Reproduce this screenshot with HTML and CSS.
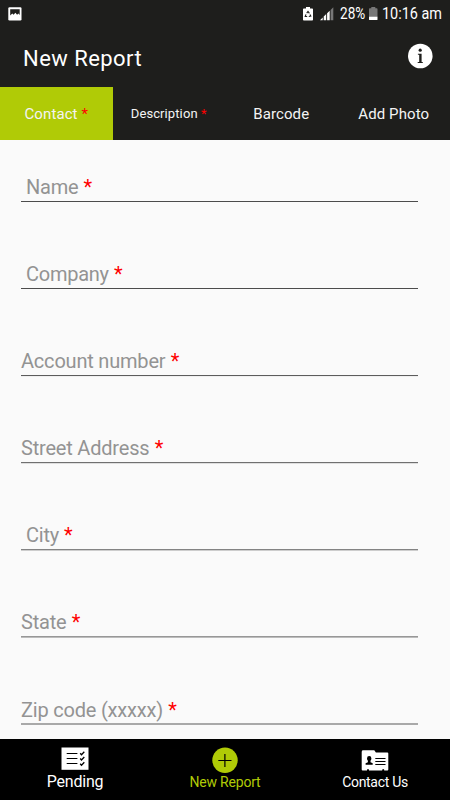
FILE: index.html
```html
<!DOCTYPE html>
<html lang="en">
<head>
<meta charset="utf-8">
<meta name="viewport" content="width=device-width, initial-scale=1">
<title>New Report</title>
<link rel="stylesheet" href="styles.css">
</head>
<body>
<div class="status">
  <svg class="s-image" width="14" height="14" viewBox="0 0 14 14"><rect x="0.3" y="0.3" width="13.2" height="13.2" rx="1.2" fill="#fff"/><path d="M2.200 2.200h9.500v5.800l-1.300-1.500-1.300 1.200-1.700-1.900-1.800 2-1.300-1.200-2.100 2z" fill="#1e1e1c"/></svg>
  <svg class="s-saver" width="10" height="14" viewBox="0 0 10 14"><path d="M3 0h4v1.500h2.200q.8 0 .8.8v10.500q0 .7-.8.7H.8q-.8 0-.8-.7v-10.500q0-.8.8-.8H3z" fill="#fff"/><path d="M3.700 6.200 5 4.500l1.400 1.900M7 7.400l.8 1.700-2 .4M4.200 9.500H2.200l.8-2.100" fill="none" stroke="#1e1e1c" stroke-width="1.100"/></svg>
  <svg class="s-signal" width="14" height="14" viewBox="0 0 14 14"><path d="M10.600 3 13.300.3v12.900h-2.700z" fill="#777"/><path d="M0 13.200 2.700 10.500v2.700zM3.700 9.500 6.200 7v6.200H3.700zM7.100 6.200 9.700 3.700v9.500H7.100z" fill="#fff"/></svg>
  <span class="s-pct">28%</span>
  <svg class="s-batt" width="9" height="14" viewBox="0 0 9 14"><path d="M2.300 0h4v1.300h1.500q.7 0 .7.7v8H0V2q0-.7.7-.7h1.600z" fill="#777"/><path d="M0 9.700h8.500v2.800q0 .6-.7.600H.7q-.7 0-.7-.6z" fill="#fff"/></svg>
  <span class="s-time">10:16 am</span>
</div>
<header class="bar">
  <h1>New Report</h1>
  <svg class="info" width="26" height="26" viewBox="0 0 26 26"><circle cx="13.300" cy="13" r="12.300" fill="#fff"/><circle cx="13.200" cy="7.200" r="1.600" fill="#1e1e1c"/><path d="M10.900 10.700h3.700v8.200h1.200v1.100h-5.100v-1.100h1.500v-7.100h-1.300z" fill="#1e1e1c"/></svg>
</header>
<nav class="tabs">
  <div class="tab active">Contact&nbsp;<i>*</i></div>
  <div class="tab small">Description&nbsp;<i>*</i></div>
  <div class="tab">Barcode</div>
  <div class="tab">Add Photo</div>
</nav>
<main class="form">
  <div class="field indent">Name <i>*</i></div>
  <div class="field indent">Company <i>*</i></div>
  <div class="field l3">Account number <i>*</i></div>
  <div class="field l4">Street Address <i>*</i></div>
  <div class="field indent l5">City <i>*</i></div>
  <div class="field l6">State <i>*</i></div>
  <div class="field l7">Zip code (xxxxx) <i>*</i></div>
</main>
<footer class="bottom">
  <div class="item pending">
    <svg width="28" height="24" viewBox="0 0 28 24"><rect x=".5" y=".5" width="27" height="22.300" fill="#fff"/><path d="M5.700 6.500h10.700M5.700 11.500h10.700M5.700 16.500h10.700" stroke="#000" stroke-width="1"/><path d="m19.200 6.200 1.300 1.500 2.800-3M19.200 11.500l1.300 1.500 2.800-3M19.200 16.800l1.300 1.500 2.800-3" fill="none" stroke="#000" stroke-width="1.300"/></svg>
    <span>Pending</span>
  </div>
  <div class="item current">
    <svg width="26" height="26" viewBox="0 0 26 26"><circle cx="13" cy="13.300" r="12.700" fill="#b0cb06"/><path d="M6.300 13.500h13.200M12.900 6.900v13.200" stroke="#000" stroke-width="1.200"/></svg>
    <span>New Report</span>
  </div>
  <div class="item contact">
    <svg width="28" height="22" viewBox="0 0 28 22"><path d="M.7 2Q.7.300 1.800.300h11.500l1.600 2.100h11.400q1 0 1 1v16q0 1-1 1h-3.100v-.7q-1-1.400-2 0v.7H8v-.7q-1-1.400-2 0v.7H1.700q-1 0-1-1z" fill="#fff"/><path d="M8.200 6q2.200 0 2.200 2.400 0 1.500-.9 2.400v1.400l2.200 1v1.500H4.600v-1.500l2.300-1v-1.400Q6 9.900 6 8.400 6 6 8.200 6z" fill="#000"/><path d="M14.300 8.500H24.500M14.300 11.500H24.500M14.300 14.500H24.500" stroke="#000" stroke-width="1"/></svg>
    <span>Contact Us</span>
  </div>
</footer>
</body>
</html>
```
FILE: styles.css
```css
* { box-sizing: border-box; }
body {
  margin: 0;
  width: 450px;
  height: 800px;
  overflow: hidden;
  display: flex;
  flex-direction: column;
  background: #fafafa;
  font-family: Roboto, "Liberation Sans", sans-serif;
}
i { font-style: normal; color: #f00; }
svg { display: block; flex: none; }
.status {
  height: 28px;
  flex: none;
  display: flex;
  align-items: center;
  background: #1e1e1c;
  color: #fff;
  font-size: 16px;
  line-height: 30px;
  padding-left: 8px;
}
.s-saver { margin-left: 281px; }
.s-signal { margin-left: 7px; }
.s-pct, .s-time { transform-origin: 0 50%; white-space: nowrap; flex: none; }
.s-pct { width: 25px; margin-left: 6px; transform: scaleX(.85); }
.s-batt { margin-left: 4px; }
.s-time { margin-left: 4px; transform: scaleX(.9); }
.bar {
  height: 59px;
  flex: none;
  display: flex;
  justify-content: space-between;
  background: #1e1e1c;
  color: #fff;
  padding: 15px 17px 0 23px;
}
h1 { margin: 0; font-size: 22px; line-height: 31px; font-weight: 400; letter-spacing: .45px; }
.tabs {
  height: 53px;
  flex: none;
  display: grid;
  grid-template-columns: repeat(4, 1fr);
  grid-template-rows: 53px;
  background: #1e1e1c;
  color: #f4f4f4;
  font-size: 15px;
  line-height: 54px;
  letter-spacing: .1px;
}
.tab { display: flex; justify-content: center; }
.active { background: #b0cb06; }
.small { font-size: 13px; letter-spacing: .1px; }
.form { flex: 1; min-height: 0; padding: 26px 32px 0 21px; overflow: hidden; }
.field {
  height: 36px;
  margin-bottom: 51px;
  border-bottom: 1px solid #4c4c4c;
  color: #939393;
  font-size: 20px;
  line-height: 42px;
  letter-spacing: -.2px;
  white-space: nowrap;
}
.indent { padding-left: 5px; letter-spacing: -.25px; }
.l3 { border-color: #5c5c5c; box-shadow: 0 1px #efefef; }
.l4 { border-color: #707070; box-shadow: 0 1px #dedede; }
.l5 { border-color: #838383; box-shadow: 0 1px #cdcdcd; }
.l6 { border-color: #979797; box-shadow: 0 1px #bcbcbc; line-height: 43px; }
.l7 { border-color: #a9a9a9; box-shadow: 0 1px #a9a9a9; line-height: 44px; }
.field i { margin-left: .5px; }
.bottom {
  height: 61px;
  flex: none;
  display: grid;
  grid-template-columns: repeat(3, 1fr);
  background: #000;
  color: #fff;
}
.item { display: flex; flex-direction: column; align-items: center; padding-top: 8px; font-size: 14px; line-height: 18px; }
.item span { letter-spacing: -.2px; }
.pending { font-size: 16px; line-height: 22px; }
.current { color: #b0cb06; }
.contact { padding-top: 11px; line-height: 20px; }
.contact span { letter-spacing: -.3px; }
```
